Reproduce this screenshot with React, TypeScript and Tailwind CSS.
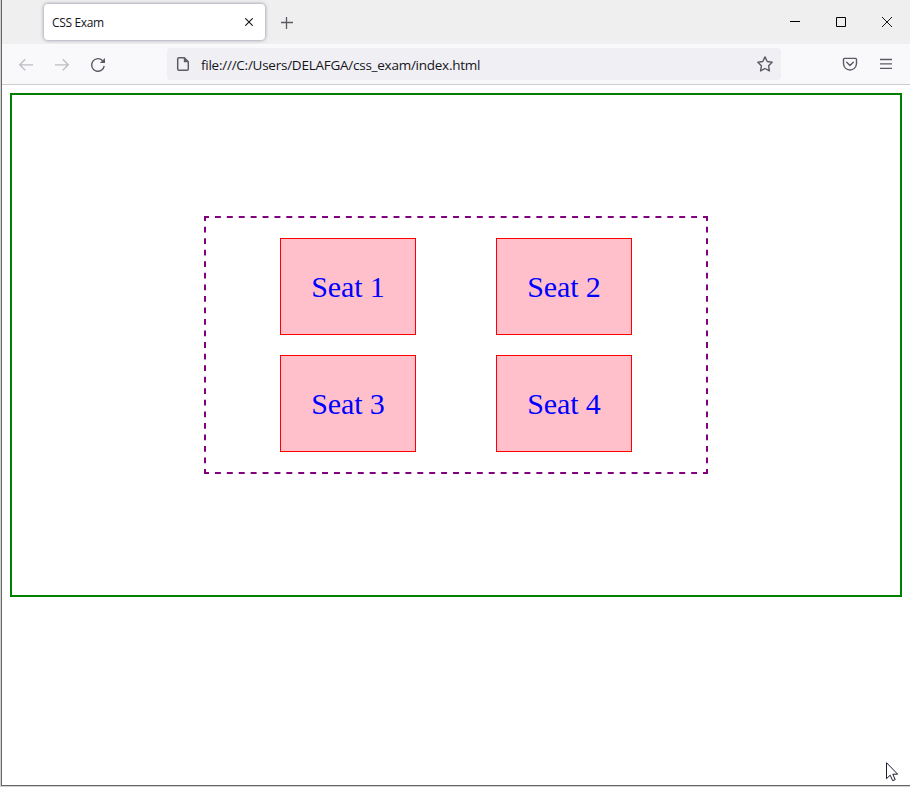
import React from "react";

const seats = ["Seat 1", "Seat 2", "Seat 3", "Seat 4"];

function TitleBar() {
  return (
    <div className="flex h-11 items-start bg-[#efefef]">
      <div className="ml-[42px] mt-1 flex h-9 w-[221px] items-center justify-between rounded bg-white pl-2 pr-3 shadow-[0_0_3px_1px_rgba(110,110,140,0.5)]">
        <span className="mt-[2px] whitespace-nowrap font-['Open_Sans',sans-serif] text-[12px] leading-4 tracking-[-0.35px] text-[#15141a]">CSS Exam</span>
        <svg width="8" height="8" viewBox="0 0 8 8" fill="none" stroke="#15141a" strokeWidth="1.1">
          <path d="M0.3 0.3L7.7 7.7M7.7 0.3L0.3 7.7" />
        </svg>
      </div>
      <svg className="ml-4 mt-[17px]" width="12" height="12" viewBox="0 0 12 12" stroke="#5b5b66" strokeWidth="1.3">
        <path d="M5.5 0V12M0 5.5H12" />
      </svg>
      <div className="ml-auto mr-[18px] mt-[17px] flex gap-9">
        <svg width="10" height="10" viewBox="0 0 10 10" fill="none" stroke="#000"><path d="M0 4.5H10" /></svg>
        <svg width="10" height="10" viewBox="0 0 10 10" fill="none" stroke="#000"><path d="M0.5 0.5H9.5V9.5H0.5Z" /></svg>
        <svg width="10" height="10" viewBox="0 0 10 10" stroke="#000" strokeWidth="0.9"><path d="M0 0L10 10M10 0L0 10" /></svg>
      </div>
    </div>
  );
}

function ToolBar() {
  return (
    <div className="flex h-[41px] items-center border-b border-[#cccccc] bg-[#f9f9fb]">
      <svg className="ml-4 mt-px" width="16" height="16" viewBox="0 0 16 16" fill="none" stroke="#bcbcc3" strokeWidth="1.3">
        <path d="M15 7.8H1.7M7.2 2.3L1.7 7.8L7.2 13.3" />
      </svg>
      <svg className="ml-5 mt-px" width="16" height="16" viewBox="0 0 16 16" fill="none" stroke="#bcbcc3" strokeWidth="1.3">
        <path d="M1 7.8H14.3M8.8 2.3L14.3 7.8L8.8 13.3" />
      </svg>
      <svg className="ml-5 mt-px" width="16" height="16" viewBox="0 0 16 16" fill="none" stroke="#5b5b66" strokeWidth="1.4">
        <path d="M14.2 8.8A6.3 6.3 0 1 1 12.6 3.7" />
        <path d="M15 1V6H9.8Z" fill="#5b5b66" stroke="none" />
      </svg>
      <div className="ml-[61px] flex h-8 w-[614px] items-center rounded bg-[#f0f0f4]">
        <svg className="ml-2" width="16" height="16" viewBox="0 0 16 16" fill="none" stroke="#5b5b66" strokeWidth="1.5">
          <path d="M4 1.7H9.3L13.3 5.7V13Q13.3 14.3 12 14.3H4Q2.7 14.3 2.7 13V3Q2.7 1.7 4 1.7Z" />
          <path d="M8.8 1.5V6.2H13.5Z" fill="#5b5b66" stroke="none" />
        </svg>
        <span className="ml-[10px] mt-[2px] whitespace-nowrap font-['Open_Sans',sans-serif] text-[13.5px] leading-5 tracking-[-0.25px] text-[#15141a]">file:///C:/Users/DELAFGA/css_exam/index.html</span>
        <svg className="ml-auto mr-2" width="16" height="16" viewBox="0 0 16 16" fill="none" stroke="#5b5b66" strokeWidth="1.4" strokeLinejoin="round">
          <path d="M8 0.9L10.2 5.5L15.2 6.2L11.6 9.8L12.4 14.9L8 12.5L3.6 14.9L4.4 9.8L0.8 6.2L5.8 5.5Z" />
        </svg>
      </div>
      <svg className="ml-[61px]" width="16" height="16" viewBox="0 0 16 16" fill="none" stroke="#5b5b66" strokeWidth="1.4" strokeLinecap="round" strokeLinejoin="round">
        <path d="M2.5 2.4H13.5Q14.5 2.4 14.5 3.4V7.6A6.5 6.4 0 0 1 1.5 7.6V3.4Q1.5 2.4 2.5 2.4Z" />
        <path d="M4.7 6.3L8 9.4L11.3 6.3" />
      </svg>
      <svg className="ml-[22px]" width="12" height="12" viewBox="0 0 12 12" stroke="#5b5b66" strokeWidth="1.3">
        <path d="M0 1.5H12M0 5.8H12M0 10.3H12" />
      </svg>
    </div>
  );
}

function DashedOutline() {
  return (
    <svg className="pointer-events-none absolute inset-0" width="504" height="258" viewBox="0 0 504 258" fill="none" stroke="#800080" strokeWidth="2">
      <path d="M2 1H502M2 257H502" strokeDasharray="5.952 5.953" strokeDashoffset="2.976" />
      <path d="M1 2V256M503 2V256" strokeDasharray="5.772 5.773" strokeDashoffset="2.886" />
      <path d="M0 1H2M502 1H504M0 257H2M502 257H504" />
    </svg>
  );
}

export default function App() {
  return (
    <div className="relative h-[787px] w-[910px] overflow-hidden bg-[#d0d1cc] pb-px pl-px">
      <div className="flex h-full flex-col border-b border-l border-[#666666] bg-white">
        <TitleBar />
        <ToolBar />
        <main className="mx-2 mt-2 flex h-[504px] items-start justify-center border-2 border-[#008000] pt-[121px]">
          <div className="relative grid h-[258px] w-[504px] grid-cols-[136px_136px] content-center justify-center gap-x-20 gap-y-5">
            <DashedOutline />
            {seats.map((seat) => (
              <div key={seat} className="flex h-[97px] items-center justify-center border border-[#ff0000] bg-[#ffc0cb] font-['Liberation_Serif',serif] text-[30px] leading-none tracking-[-0.1px] text-[#0000ff]">
                {seat}
              </div>
            ))}
          </div>
        </main>
      </div>
      <svg className="absolute left-[886px] top-[762px]" width="13" height="20" viewBox="0 0 13 20" fill="#fff" stroke="#1b1b2b">
        <path d="M0.5 0.7V16.7L4.2 13.2L6.7 18.7L9.2 17.6L6.8 12.2H11.7Z" />
      </svg>
    </div>
  );
}
